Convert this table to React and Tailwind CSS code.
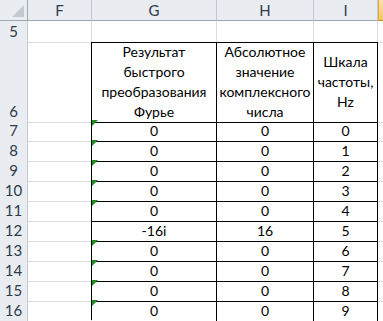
import React from "react";

// ширины колонок: заголовок строк, F, G, H, I, J
const cols = "grid-cols-[28px_64px_125px_97px_64px_1fr]";

const rows = [
  { n: 7, g: "0", h: "0", i: "0", flag: true },
  { n: 8, g: "0", h: "0", i: "1", flag: true },
  { n: 9, g: "0", h: "0", i: "2", flag: true },
  { n: 10, g: "0", h: "0", i: "3", flag: true },
  { n: 11, g: "0", h: "0", i: "4", flag: true },
  { n: 12, g: "-16i", h: "16", i: "5", flag: false },
  { n: 13, g: "0", h: "0", i: "6", flag: true },
  { n: 14, g: "0", h: "0", i: "7", flag: true },
  { n: 15, g: "0", h: "0", i: "8", flag: true },
  { n: 16, g: "0", h: "0", i: "9", flag: true },
];

function RowHead({ children, className = "" }) {
  return (
    <div
      className={`flex items-end justify-center border-r border-b border-[#c5c9cf] bg-[#e9ecf0] pb-[1px] text-[15px] text-[#2f3b4b] ${className}`}
    >
      {children}
    </div>
  );
}

function Cell({ children, className = "" }) {
  return (
    <div className={`flex items-center justify-center ${className}`}>
      {children}
    </div>
  );
}

export default function App() {
  return (
    <div
      className="h-[321px] w-[383px] overflow-hidden bg-white text-[14px] leading-[20px] text-black"
      style={{ fontFamily: "Lato, 'Open Sans', 'Noto Sans', sans-serif" }}
    >
      {/* шапка колонок */}
      <div className={`grid ${cols} h-[21px]`}>
        <div className="relative border-r border-b border-[#9fa6b0] bg-[#e9ecf0]">
          <svg className="absolute right-[3px] bottom-[3px]" width="12" height="12" viewBox="0 0 12 12">
            <path d="M12 0 L12 12 L0 12 Z" fill="#c4c9d0" />
          </svg>
        </div>
        {["F", "G", "H", "I"].map((c) => (
          <div
            key={c}
            className="flex items-center justify-center border-r border-b border-r-[#c5c9cf] border-b-[#9fa6b0] bg-[#e9ecf0] text-[15px] text-[#2f3b4b]"
          >
            {c}
          </div>
        ))}
        <div className="border-l border-b border-l-[#e0a93a] border-b-[#c08a2c] bg-gradient-to-b from-[#fbe3a6] to-[#f3c563]" />
      </div>

      {/* строка 5 */}
      <div className={`grid ${cols} h-[21px]`}>
        <RowHead>5</RowHead>
        <Cell className="border-r border-b border-[#dadcdd]" />
        <Cell className="border-r border-b border-r-[#dadcdd] border-b-black" />
        <Cell className="border-r border-b border-r-[#dadcdd] border-b-black" />
        <Cell className="border-r border-b border-r-[#dadcdd] border-b-black" />
        <Cell className="border-b border-[#dadcdd]" />
      </div>

      {/* строка 6 — заголовки таблицы */}
      <div className={`grid ${cols} h-[78px]`}>
        <RowHead>6</RowHead>
        <Cell className="border-r border-b border-r-black border-b-[#dadcdd]" />
        <Cell className="border-r border-b border-black text-center">
          <span>
            Результат
            <br />
            быстрого
            <br />
            преобразования
            <br />
            Фурье
          </span>
        </Cell>
        <Cell className="border-r border-b border-black text-center">
          <span>
            Абсолютное
            <br />
            значение
            <br />
            комплексного
            <br />
            числа
          </span>
        </Cell>
        <Cell className="border-r border-b border-black text-center">
          <span>
            Шкала
            <br />
            частоты,
            <br />
            Hz
          </span>
        </Cell>
        <Cell className="border-b border-[#dadcdd]" />
      </div>

      {rows.map((r) => (
        <div key={r.n} className={`grid ${cols} h-[20px]`}>
          <RowHead>{r.n}</RowHead>
          <Cell className="border-r border-b border-r-black border-b-[#dadcdd]" />
          <Cell className="relative border-r border-b border-black">
            {r.flag && (
              <span className="absolute top-0 left-0 h-0 w-0 border-t-[6px] border-r-[6px] border-t-[#1e8c1e] border-r-transparent" />
            )}
            {r.g}
          </Cell>
          <Cell className="border-r border-b border-black">{r.h}</Cell>
          <Cell className="border-r border-b border-black">{r.i}</Cell>
          <Cell className="border-b border-[#dadcdd]" />
        </div>
      ))}

      {/* строка 17, видна лишь верхняя кромка */}
      <div className={`grid ${cols} h-[20px]`}>
        <RowHead />
        <Cell className="border-r border-[#dadcdd]" />
        <Cell className="border-r border-black" />
        <Cell className="border-r border-black" />
        <Cell className="border-r border-black" />
        <Cell />
      </div>
    </div>
  );
}
